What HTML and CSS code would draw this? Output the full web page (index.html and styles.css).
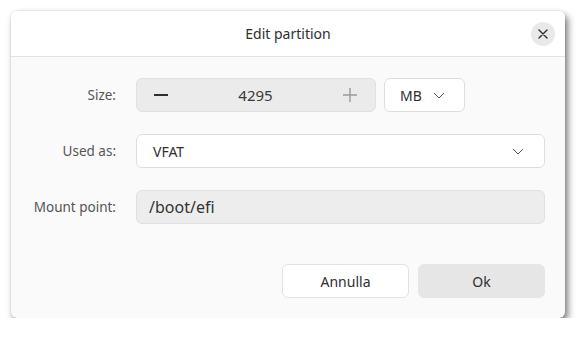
FILE: index.html
```html
<!DOCTYPE html>
<html lang="en">
<head>
    <meta charset="UTF-8">
    <meta name="viewport" content="width=device-width, initial-scale=1.0">
    <title>Edit partition</title>
    <link rel="stylesheet" href="styles.css">
</head>
<body>
    <div class="dialog">
        <div class="header">
            <span class="title">Edit partition</span>
            <button class="close" aria-label="Close">
                <svg width="10" height="10" viewBox="0 0 10 10">
                    <path d="M1 1 L9 9 M9 1 L1 9" stroke="#2e2e2e" stroke-width="1.4" stroke-linecap="round"/>
                </svg>
            </button>
        </div>
        <div class="content">
            <div class="form">
                <label class="label">Size:</label>
                <div class="size-row">
                    <div class="spin">
                        <span class="spin-btn minus">
                            <svg width="16" height="16" viewBox="0 0 16 16">
                                <path d="M1 8 H15" stroke="#2e2e2e" stroke-width="2"/>
                            </svg>
                        </span>
                        <span class="spin-value">4295</span>
                        <span class="spin-btn plus">
                            <svg width="16" height="16" viewBox="0 0 16 16">
                                <path d="M1 8 H15 M8 1 V15" stroke="#9a9a9a" stroke-width="1.4"/>
                            </svg>
                        </span>
                    </div>
                    <div class="dropdown unit">
                        <span>MB</span>
                        <svg class="chevron" width="12" height="7" viewBox="0 0 12 7">
                            <path d="M1 1 L6 6 L11 1" fill="none" stroke="#555" stroke-width="1"/>
                        </svg>
                    </div>
                </div>

                <label class="label">Used as:</label>
                <div class="dropdown">
                    <span>VFAT</span>
                    <svg class="chevron" width="12" height="7" viewBox="0 0 12 7">
                        <path d="M1 1 L6 6 L11 1" fill="none" stroke="#555" stroke-width="1"/>
                    </svg>
                </div>

                <label class="label">Mount point:</label>
                <div class="entry">/boot/efi</div>
            </div>
            <div class="actions">
                <button class="btn">Annulla</button>
                <button class="btn btn-ok">Ok</button>
            </div>
        </div>
    </div>
</body>
</html>
```

FILE: styles.css
```css
body {
    margin: 0;
    padding: 0;
    background-color: #ffffff;
    font-family: 'Noto Sans', 'Open Sans', sans-serif;
    font-size: 14px;
    color: #303030;
}

.dialog {
    width: 554px;
    height: 307px;
    margin: 11px 0 0 11px;
    border-radius: 6px;
    overflow: hidden;
    background-color: #fafafa;
    box-shadow: 3px 4px 7px rgba(0, 0, 0, 0.5), 0 0 2px rgba(0, 0, 0, 0.15);
    display: flex;
    flex-direction: column;
}

.header {
    position: relative;
    height: 45px;
    background-color: #ffffff;
    border-bottom: 1px solid #e2e2e2;
    display: flex;
    align-items: center;
    justify-content: center;
}

.title {
    font-size: 14px;
    color: #2e2e2e;
}

.close {
    position: absolute;
    right: 10px;
    top: 11px;
    width: 24px;
    height: 24px;
    border: none;
    border-radius: 50%;
    background-color: #e9e9e9;
    padding: 0;
    display: flex;
    align-items: center;
    justify-content: center;
}

.content {
    flex: 1;
    padding: 21px 20px 20px 20px;
    display: flex;
    flex-direction: column;
}

.form {
    display: grid;
    grid-template-columns: 85px 1fr;
    grid-auto-rows: 34px;
    column-gap: 20px;
    row-gap: 22px;
    align-items: center;
}

.label {
    display: flex;
    justify-content: flex-end;
    white-space: nowrap;
    color: #555555;
    font-size: 13.5px;
}

.size-row {
    display: flex;
    gap: 8px;
    height: 100%;
}

.spin {
    width: 240px;
    box-sizing: border-box;
    background-color: #ebebeb;
    border: 1px solid #e0e0e0;
    border-radius: 6px;
    display: flex;
    align-items: center;
    padding: 0 17px 0 16px;
}

.spin-btn {
    display: flex;
    align-items: center;
}

.spin-value {
    flex: 1;
    text-align: center;
    font-size: 15px;
    color: #3a3a3a;
}

.dropdown {
    height: 100%;
    box-sizing: border-box;
    background-color: #ffffff;
    border: 1px solid #dedede;
    border-radius: 6px;
    display: flex;
    align-items: center;
    justify-content: space-between;
    padding: 0 20px 0 16px;
    color: #2e2e2e;
}

.dropdown.unit {
    width: 81px;
    padding: 0 19px 0 15px;
}

.chevron {
    display: block;
}

.entry {
    height: 100%;
    box-sizing: border-box;
    background-color: #ededed;
    border: 1px solid #e0e0e0;
    border-radius: 6px;
    display: flex;
    align-items: center;
    padding: 0 12px;
    font-size: 16px;
    color: #333333;
}

.actions {
    margin-top: 40px;
    display: flex;
    justify-content: flex-end;
    gap: 9px;
}

.btn {
    width: 127px;
    height: 34px;
    border: 1px solid #e2e2e2;
    border-radius: 6px;
    background-color: #ffffff;
    font-family: inherit;
    font-size: 14px;
    color: #2e2e2e;
}

.btn-ok {
    background-color: #e6e6e6;
    border-color: #e6e6e6;
}
```
